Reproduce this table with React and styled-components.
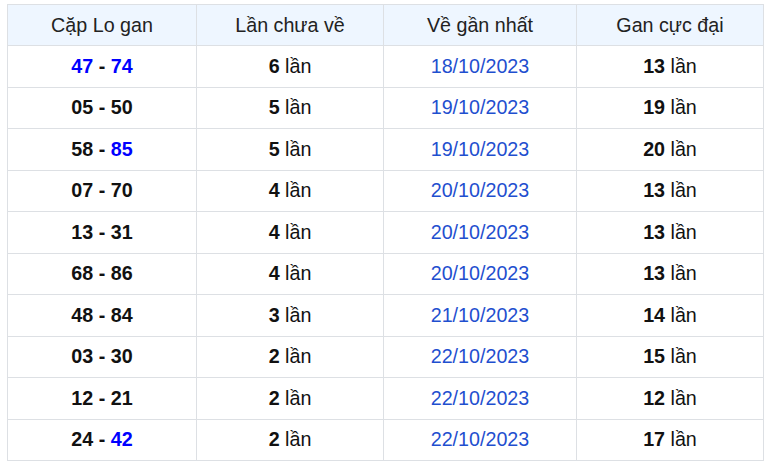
import styled, { createGlobalStyle } from 'styled-components';

const GlobalStyle = createGlobalStyle`
  body {
    margin: 0;
    padding: 4px 7px 0 7px;
    background: #ffffff;
    font-family: "Liberation Sans", Arial, sans-serif;
  }
`;

const Table = styled.table`
  width: 756px;
  border-collapse: collapse;
  table-layout: fixed;
  font-size: 19.7px;
  color: #111;
`;

const HeadCell = styled.th`
  height: 40px;
  padding: 0;
  font-weight: 400;
  color: #222;
  background: #eef6ff;
  border: 1px solid #dde0e4;
  text-align: center;
`;

const Cell = styled.td`
  height: 40.5px;
  padding: 0;
  border: 1px solid #dde0e4;
  text-align: center;
`;

const Num = styled.b`
  font-weight: 700;
  color: ${({ $hot }) => ($hot ? '#0000ff' : '#111')};
`;

const DateText = styled.span`
  color: #1f4fcf;
`;

const rows = [
  ['47', '74', true, true, 6, '18/10/2023', 13],
  ['05', '50', false, false, 5, '19/10/2023', 19],
  ['58', '85', false, true, 5, '19/10/2023', 20],
  ['07', '70', false, false, 4, '20/10/2023', 13],
  ['13', '31', false, false, 4, '20/10/2023', 13],
  ['68', '86', false, false, 4, '20/10/2023', 13],
  ['48', '84', false, false, 3, '21/10/2023', 14],
  ['03', '30', false, false, 2, '22/10/2023', 15],
  ['12', '21', false, false, 2, '22/10/2023', 12],
  ['24', '42', false, true, 2, '22/10/2023', 17],
];

const App = () => {
  return (
    <>
      <GlobalStyle />
      <Table>
        <colgroup>
          <col style={{ width: 189 }} />
          <col style={{ width: 187 }} />
          <col style={{ width: 193 }} />
          <col style={{ width: 187 }} />
        </colgroup>
        <thead>
          <tr>
            <HeadCell>Cặp Lo gan</HeadCell>
            <HeadCell>Lần chưa về</HeadCell>
            <HeadCell>Về gần nhất</HeadCell>
            <HeadCell>Gan cực đại</HeadCell>
          </tr>
        </thead>
        <tbody>
          {rows.map(([a, b, hotA, hotB, miss, date, max]) => (
            <tr key={a + b}>
              <Cell>
                <Num $hot={hotA}>{a}</Num> <Num>-</Num> <Num $hot={hotB}>{b}</Num>
              </Cell>
              <Cell>
                <Num>{miss}</Num> lần
              </Cell>
              <Cell>
                <DateText>{date}</DateText>
              </Cell>
              <Cell>
                <Num>{max}</Num> lần
              </Cell>
            </tr>
          ))}
        </tbody>
      </Table>
    </>
  );
};

export default App;
